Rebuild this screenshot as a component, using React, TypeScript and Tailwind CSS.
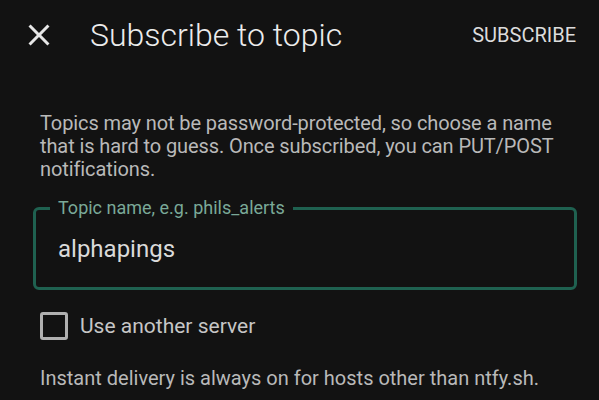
import React from "react";

export default function App() {
  return (
    <div
      className="w-[599px] h-[400px] overflow-hidden bg-[#121212] text-[#e6e6e6]"
      style={{ fontFamily: "Roboto, 'Liberation Sans', sans-serif" }}
    >
      <div className="flex items-center h-[69px] pl-[21px] pr-[23px]">
        <svg width="36" height="36" viewBox="0 0 24 24" fill="#e6e6e6">
          <path d="M19 6.41 17.59 5 12 10.59 6.41 5 5 6.41 10.59 12 5 17.59 6.41 19 12 13.41 17.59 19 19 17.59 13.41 12z" />
        </svg>
        <div className="ml-[33px] text-[32px] leading-[40px] font-light text-[#ececec]">Subscribe to topic</div>
        <div className="ml-auto text-[20px] leading-[24px] text-[#dcdcdc]">SUBSCRIBE</div>
      </div>

      <div className="pl-[40px] pr-[20px]">
        <p className="mt-[43px] text-[20px] leading-[23px] tracking-[-0.1px] text-[#b9b9b9]">
          Topics may not be password-protected, so choose a name that is hard to guess. Once subscribed, you can PUT/POST notifications.
        </p>
      </div>

      <div className="pl-[33px]">
        <div className="relative mt-[26px] w-[544px] h-[83px] rounded-[6px] border-[3px] border-[#1f6150] flex items-center">
          <span className="absolute left-[14px] top-[-12px] px-[8px] bg-[#121212] text-[18px] leading-[20px] text-[#7aa998]">
            Topic name, e.g. phils_alerts
          </span>
          <span className="pl-[22px] text-[24px] leading-[28px] text-[#dadada]">alphapings</span>
        </div>
      </div>

      <div className="flex items-center mt-[22px] pl-[40px] h-[28px]">
        <div className="w-[28px] h-[28px] rounded-[3px] border-[3px] border-[#b0b0b0]" />
        <span className="ml-[12px] text-[21px] leading-[24px] text-[#c6c6c6]">Use another server</span>
      </div>

      <p className="mt-[27px] pl-[40px] text-[20px] leading-[23px] text-[#b9b9b9]">
        Instant delivery is always on for hosts other than ntfy.sh.
      </p>
    </div>
  );
}
